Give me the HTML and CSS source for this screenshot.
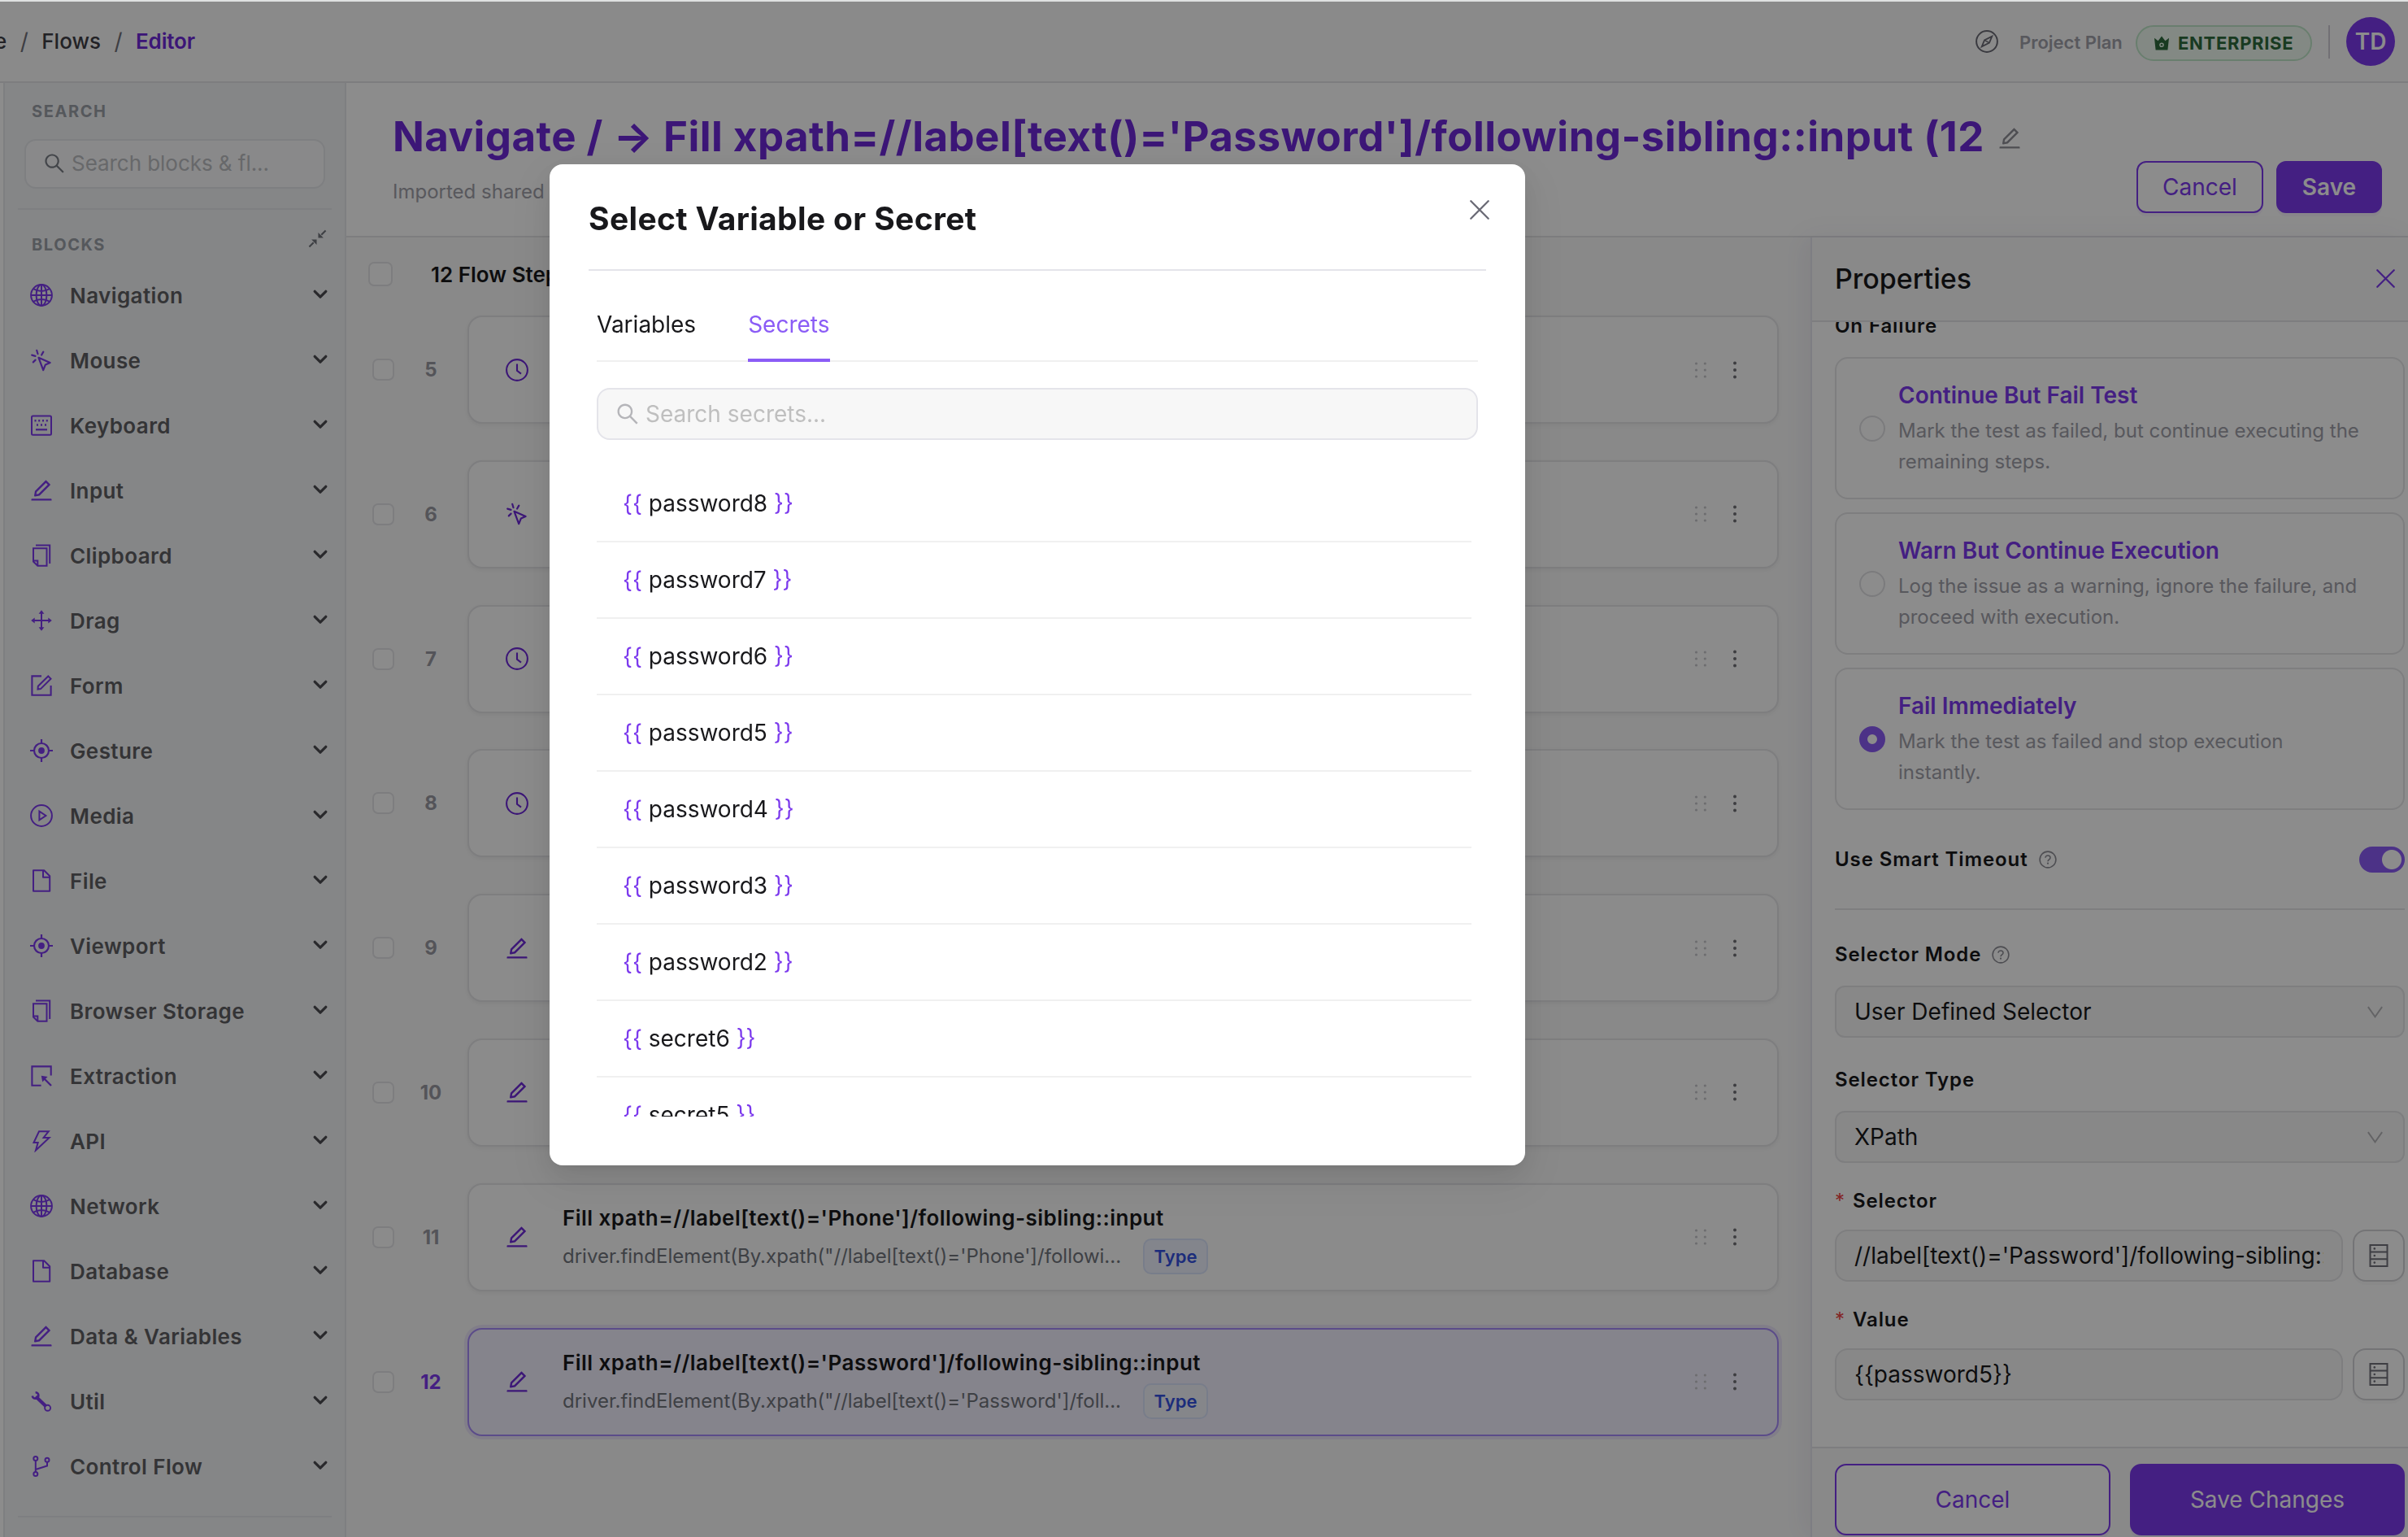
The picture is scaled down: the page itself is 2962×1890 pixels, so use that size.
FILE: index.html
```html
<!DOCTYPE html>
<html lang="en">
<head>
<meta charset="utf-8">
<title>Flow Editor</title>
<link rel="stylesheet" href="styles.css">
</head>
<body>
<svg class="sprite" aria-hidden="true">
  <symbol id="i-globe" viewBox="0 0 28 28"><g fill="none" stroke="currentColor" stroke-width="2"><circle cx="14" cy="14" r="12.9"/><ellipse cx="14" cy="14" rx="6.4" ry="12.9"/><path d="M14 1v26M1 14h26M4 6.2c6 3.6 14 3.6 20 0M4 21.8c6-3.6 14-3.6 20 0"/></g></symbol>
  <symbol id="i-click" viewBox="0 0 28 28"><g fill="none" stroke="currentColor" stroke-width="2.2" stroke-linecap="round" stroke-linejoin="round"><path d="M10.5 10.8 24.6 17 18.9 19.4 16.2 26.2z"/><path d="M8.2 1.8l1.3 4.4M16.3 3.6l-2.2 3.9M2.2 7.6l4.3 1.3M6.6 13.6 3.8 16.4"/></g></symbol>
  <symbol id="i-keyboard" viewBox="0 0 28 28"><rect x="2" y="2.4" width="24" height="23.4" rx="1.5" fill="none" stroke="currentColor" stroke-width="2"/><path d="M5.5 8.2h2M10.2 8.2h2M15 8.2h2M19.8 8.2h2M8 13.5h2M13 13.5h2M18 13.5h2" stroke="currentColor" stroke-width="2.4"/><path d="M7 19.3h14" stroke="currentColor" stroke-width="2.2"/></symbol>
  <symbol id="i-edit" viewBox="64 64 896 896"><path fill="currentColor" d="M257.7 752c2 0 4-.2 6-.5L431.9 722c2-.4 3.9-1.3 5.3-2.8l423.9-423.9a9.96 9.96 0 000-14.1L694.9 114.9c-1.9-1.9-4.4-2.9-7.1-2.9s-5.2 1-7.1 2.9L256.8 538.8c-1.5 1.5-2.4 3.3-2.8 5.3l-29.5 168.2a33.5 33.5 0 009.4 29.8c6.6 6.4 14.9 9.9 23.8 9.9zm67.4-174.4L687.8 215l73.3 73.3-362.7 362.6-88.9 15.7 15.6-89zM880 836H144c-17.7 0-32 14.3-32 32v36c0 4.4 3.6 8 8 8h784c4.4 0 8-3.6 8-8v-36c0-17.7-14.3-32-32-32z"/></symbol>
  <symbol id="i-copy" viewBox="0 0 28 28"><g fill="none" stroke="currentColor" stroke-width="2"><path d="M7 1.4h17.2V24"/><path d="M4 5.2h16.5v21.6H9.3L4 21.5z"/><path d="M4 20.5h5.3v6"/></g></symbol>
  <symbol id="i-drag" viewBox="0 0 28 28"><path d="M14 4v20M4 14h20" stroke="currentColor" stroke-width="2"/><path fill="currentColor" d="M14 1.2l3.4 4.5h-6.8zM14 26.8l3.4-4.5h-6.8zM1.2 14l4.5-3.4v6.8zM26.8 14l-4.5-3.4v6.8z"/></symbol>
  <symbol id="i-form" viewBox="0 0 28 28"><g fill="none" stroke="currentColor" stroke-width="2.1"><path d="M14 2.4H2.4v23.3h23.2V14"/><path d="M9.800 14.800 22.300 2.500l3.200 3.200L13 18.100l-3.500.500z" stroke-width="2"/></g></symbol>
  <symbol id="i-target" viewBox="0 0 28 28"><circle cx="14" cy="14" r="9" fill="none" stroke="currentColor" stroke-width="2.2"/><circle cx="14" cy="14" r="3.9" fill="currentColor"/><path d="M14 0v6M14 22v6M0 14h6M22 14h6" stroke="currentColor" stroke-width="2.2"/></symbol>
  <symbol id="i-play" viewBox="0 0 28 28"><g fill="none" stroke="currentColor" stroke-width="2"><circle cx="14" cy="14" r="12.9"/><path d="M11.4 8.6v10.8l8-5.4z"/></g></symbol>
  <symbol id="i-file" viewBox="0 0 28 28"><g fill="none" stroke="currentColor" stroke-width="2" stroke-linejoin="round"><path d="M4 1.3h13.2l7 7v18.400H4z"/><path d="M16 1.5v8.200h8"/></g></symbol>
  <symbol id="i-extract" viewBox="0 0 28 28"><path d="M25.7 13.5V2.4H2.4v23.3h11.2" fill="none" stroke="currentColor" stroke-width="2.1"/><path d="M26 26 16.5 16.5" stroke="currentColor" stroke-width="2.3"/><path fill="currentColor" d="M13.8 13.8l7.8 1.2-6.4 6.4z"/></symbol>
  <symbol id="i-bolt" viewBox="0 0 28 28"><path d="M11 2.2h11.8L16.6 10h7L7 25.5 9.7 16H4.5z" fill="none" stroke="currentColor" stroke-width="2"/></symbol>
  <symbol id="i-wrench" viewBox="0 0 28 28"><path d="M7 8.2 19.5 20.3" stroke="currentColor" stroke-width="4.2"/><path d="M6.6 3.2a3.8 3.8 0 1 1-3.8 4.3" fill="none" stroke="currentColor" stroke-width="2.6"/><circle cx="21.6" cy="22.3" r="3.5" fill="none" stroke="currentColor" stroke-width="1.9"/></symbol>
  <symbol id="i-branch" viewBox="0 0 28 28"><g fill="none" stroke="currentColor" stroke-width="2"><circle cx="6.8" cy="4.5" r="2.5"/><circle cx="6.8" cy="23.5" r="2.5"/><circle cx="21" cy="6.2" r="2.5"/><path d="M6.8 7v14M6.8 18 21 13.5V9"/></g></symbol>
  <symbol id="i-clock" viewBox="0 0 28 28"><g fill="none" stroke="currentColor" stroke-width="2.1"><circle cx="14" cy="14" r="12.9"/><path d="M14 6.5v8.3l5 3.8"/></g></symbol>
  <symbol id="i-down" viewBox="0 0 18 12"><path d="M2.2 2.3 9 9.2l6.8-6.900" fill="none" stroke="currentColor" stroke-width="3.2" stroke-linecap="round" stroke-linejoin="round"/></symbol>
  <symbol id="i-search" viewBox="64 64 896 896"><path fill="currentColor" d="M909.6 854.5L649.9 594.8C690.2 542.7 712 479 712 412c0-80.2-31.3-155.4-87.9-212.1-56.6-56.7-132-87.9-212.1-87.9s-155.5 31.3-212.1 87.9C143.2 256.5 112 331.8 112 412c0 80.1 31.3 155.5 87.9 212.1C256.5 680.8 331.8 712 412 712c67 0 130.6-21.8 182.7-62l259.700 259.600a8.200 8.200 0 0011.600 0l43.600-43.500a8.200 8.200 0 000-11.600zM570.400 570.400C528 612.700 471.800 636 412 636s-116-23.300-158.400-65.600C211.300 528 188 471.800 188 412s23.300-116.100 65.600-158.400C296 211.300 352.200 188 412 188s116.100 23.200 158.400 65.600S636 352.200 636 412s-23.300 116.100-65.600 158.400z"/></symbol>
  <symbol id="i-help" viewBox="0 0 24 24"><g fill="none" stroke="currentColor" stroke-width="1.7"><circle cx="12" cy="12" r="10.8"/><path d="M8.7 9.6c0-1.9 1.4-3.1 3.3-3.1s3.3 1.2 3.3 3c0 2.4-3.3 2.4-3.3 5"/></g><circle cx="12" cy="17.1" r="1.2" fill="currentColor"/></symbol>
  <symbol id="i-server" viewBox="0 0 24 28"><g fill="none" stroke="currentColor" stroke-width="2"><rect x="1.5" y="1" width="21" height="26"/><path d="M1.5 9.6h21M1.5 18.3h21"/></g><g fill="currentColor"><circle cx="6.8" cy="5.4" r="1.3"/><circle cx="6.8" cy="14" r="1.3"/><circle cx="6.8" cy="22.6" r="1.3"/></g></symbol>
  <symbol id="i-arrow" viewBox="0 0 22 16"><path d="M1.8 1.2 11 14.2 20.2 1.2" fill="none" stroke="currentColor" stroke-width="2"/></symbol>
  <symbol id="i-x" viewBox="0 0 24 24"><path d="M1.3 1.3 22.7 22.7M22.7 1.3 1.3 22.7" fill="none" stroke="currentColor" stroke-width="2.3" stroke-linecap="round"/></symbol>
  <symbol id="i-grip" viewBox="0 0 16 20"><g fill="currentColor"><circle cx="2.5" cy="2" r="1.6"/><circle cx="13.3" cy="2" r="1.6"/><circle cx="2.5" cy="10" r="1.6"/><circle cx="13.3" cy="10" r="1.6"/><circle cx="2.5" cy="18" r="1.6"/><circle cx="13.3" cy="18" r="1.6"/></g></symbol>
  <symbol id="i-more" viewBox="0 0 6 22"><g fill="currentColor"><circle cx="3" cy="2.5" r="2"/><circle cx="3" cy="11" r="2"/><circle cx="3" cy="19.5" r="2"/></g></symbol>
</svg>

<div class="app">
  <header class="topbar">
    <nav class="crumbs"><span>e</span><i>/</i><span>Flows</span><i>/</i><b>Editor</b></nav>
    <div class="topbar-right">
      <svg class="compass" viewBox="0 0 28 28"><g fill="none" stroke="currentColor" stroke-width="2"><circle cx="14" cy="14" r="12.9"/><path d="M20.3 7.7 17 15.6 7.7 20.3 11 12.4z" stroke-width="1.8"/><path d="M11 12.4l6 3.2" stroke-width="1.6"/></g></svg>
      <span class="plan">Project Plan</span>
      <span class="badge"><svg class="crown" viewBox="0 0 18 18"><path fill="currentColor" fill-rule="evenodd" d="M0 2.8l4.6 3.4L9 .4l4.4 5.8L18 2.8 16.4 17.4H1.6zM9 8.4a2.800 2.800 0 100 5.600 2.800 2.800 0 000-5.600z"/><circle cx="9" cy="11.2" r="1.300" fill="currentColor"/></svg><span class="badge-text">ENTERPRISE</span></span>
      <span class="vline"></span>
      <span class="avatar">TD</span>
    </div>
  </header>

  <div class="body">
    <aside class="sidebar">
      <div class="side-label">SEARCH</div>
      <div class="side-search"><svg><use href="#i-search"/></svg><span>Search blocks &amp; fl...</span></div>
      <div class="side-rule"></div>
      <div class="side-head"><span class="side-label">BLOCKS</span>
        <svg class="shrink" viewBox="0 0 24 24"><path d="M22.5 1.5 17 7M1.5 22.5 7 17" stroke="currentColor" stroke-width="2.2"/><path fill="currentColor" d="M13 11V4.300l6.700 6.700zM11 13v6.700l-6.700-6.700z"/></svg></div>
      <ul class="blocks">
        <li><svg class="ic"><use href="#i-globe"/></svg><span>Navigation</span><svg class="dn"><use href="#i-down"/></svg></li>
        <li><svg class="ic"><use href="#i-click"/></svg><span>Mouse</span><svg class="dn"><use href="#i-down"/></svg></li>
        <li><svg class="ic"><use href="#i-keyboard"/></svg><span>Keyboard</span><svg class="dn"><use href="#i-down"/></svg></li>
        <li><svg class="ic"><use href="#i-edit"/></svg><span>Input</span><svg class="dn"><use href="#i-down"/></svg></li>
        <li><svg class="ic"><use href="#i-copy"/></svg><span>Clipboard</span><svg class="dn"><use href="#i-down"/></svg></li>
        <li><svg class="ic"><use href="#i-drag"/></svg><span>Drag</span><svg class="dn"><use href="#i-down"/></svg></li>
        <li><svg class="ic"><use href="#i-form"/></svg><span>Form</span><svg class="dn"><use href="#i-down"/></svg></li>
        <li><svg class="ic"><use href="#i-target"/></svg><span>Gesture</span><svg class="dn"><use href="#i-down"/></svg></li>
        <li><svg class="ic"><use href="#i-play"/></svg><span>Media</span><svg class="dn"><use href="#i-down"/></svg></li>
        <li><svg class="ic"><use href="#i-file"/></svg><span>File</span><svg class="dn"><use href="#i-down"/></svg></li>
        <li><svg class="ic"><use href="#i-target"/></svg><span>Viewport</span><svg class="dn"><use href="#i-down"/></svg></li>
        <li><svg class="ic"><use href="#i-copy"/></svg><span>Browser Storage</span><svg class="dn"><use href="#i-down"/></svg></li>
        <li><svg class="ic"><use href="#i-extract"/></svg><span>Extraction</span><svg class="dn"><use href="#i-down"/></svg></li>
        <li><svg class="ic"><use href="#i-bolt"/></svg><span>API</span><svg class="dn"><use href="#i-down"/></svg></li>
        <li><svg class="ic"><use href="#i-globe"/></svg><span>Network</span><svg class="dn"><use href="#i-down"/></svg></li>
        <li><svg class="ic"><use href="#i-file"/></svg><span>Database</span><svg class="dn"><use href="#i-down"/></svg></li>
        <li><svg class="ic"><use href="#i-edit"/></svg><span>Data &amp; Variables</span><svg class="dn"><use href="#i-down"/></svg></li>
        <li><svg class="ic"><use href="#i-wrench"/></svg><span>Util</span><svg class="dn"><use href="#i-down"/></svg></li>
        <li><svg class="ic"><use href="#i-branch"/></svg><span>Control Flow</span><svg class="dn"><use href="#i-down"/></svg></li>
      </ul>
      <div class="side-rule end"></div>
    </aside>

    <main class="main">
      <section class="head">
        <div class="head-text">
          <div class="title-row"><h1>Navigate / → Fill xpath=//label[text()='Password']/following-sibling::input (12</h1><svg><use href="#i-edit"/></svg></div>
          <p>Imported shared flow</p>
        </div>
        <div class="head-actions"><button class="btn ghost">Cancel</button><button class="btn solid strong">Save</button></div>
      </section>

      <div class="work">
        <section class="steps">
          <div class="steps-head"><span class="check big"></span><span>12 Flow Steps</span></div>
          <div class="step"><span class="check"></span><span class="num">5</span><div class="card"><svg class="ic"><use href="#i-clock"/></svg><div class="info"></div><svg class="grip"><use href="#i-grip"/></svg><svg class="more"><use href="#i-more"/></svg></div></div>
          <div class="step"><span class="check"></span><span class="num">6</span><div class="card"><svg class="ic"><use href="#i-click"/></svg><div class="info"></div><svg class="grip"><use href="#i-grip"/></svg><svg class="more"><use href="#i-more"/></svg></div></div>
          <div class="step"><span class="check"></span><span class="num">7</span><div class="card"><svg class="ic"><use href="#i-clock"/></svg><div class="info"></div><svg class="grip"><use href="#i-grip"/></svg><svg class="more"><use href="#i-more"/></svg></div></div>
          <div class="step"><span class="check"></span><span class="num">8</span><div class="card"><svg class="ic"><use href="#i-clock"/></svg><div class="info"></div><svg class="grip"><use href="#i-grip"/></svg><svg class="more"><use href="#i-more"/></svg></div></div>
          <div class="step"><span class="check"></span><span class="num">9</span><div class="card"><svg class="ic"><use href="#i-edit"/></svg><div class="info"></div><svg class="grip"><use href="#i-grip"/></svg><svg class="more"><use href="#i-more"/></svg></div></div>
          <div class="step"><span class="check"></span><span class="num">10</span><div class="card"><svg class="ic"><use href="#i-edit"/></svg><div class="info"></div><svg class="grip"><use href="#i-grip"/></svg><svg class="more"><use href="#i-more"/></svg></div></div>
          <div class="step"><span class="check"></span><span class="num">11</span><div class="card"><svg class="ic"><use href="#i-edit"/></svg>
            <div class="info"><div class="name">Fill xpath=//label[text()='Phone']/following-sibling::input</div><div class="sub"><span class="code">driver.findElement(By.xpath("//label[text()='Phone']/followi...</span><span class="tag">Type</span></div></div>
            <svg class="grip"><use href="#i-grip"/></svg><svg class="more"><use href="#i-more"/></svg></div></div>
          <div class="step active"><span class="check"></span><span class="num">12</span><div class="card"><svg class="ic"><use href="#i-edit"/></svg>
            <div class="info"><div class="name">Fill xpath=//label[text()='Password']/following-sibling::input</div><div class="sub"><span class="code">driver.findElement(By.xpath("//label[text()='Password']/foll...</span><span class="tag pale">Type</span></div></div>
            <svg class="grip"><use href="#i-grip"/></svg><svg class="more"><use href="#i-more"/></svg></div></div>
        </section>

        <aside class="props">
          <div class="props-head"><h2>Properties</h2><svg><use href="#i-x"/></svg></div>
          <div class="props-body">
            <div class="label cut">On Failure</div>
            <div class="options">
              <div class="option"><span class="radio"></span><div><div class="o-title">Continue But Fail Test</div><p>Mark the test as failed, but continue executing the<br>remaining steps.</p></div></div>
              <div class="option"><span class="radio"></span><div><div class="o-title">Warn But Continue Execution</div><p>Log the issue as a warning, ignore the failure, and<br>proceed with execution.</p></div></div>
              <div class="option"><span class="radio on"></span><div><div class="o-title">Fail Immediately</div><p>Mark the test as failed and stop execution<br>instantly.</p></div></div>
            </div>
            <div class="smart"><span class="label">Use Smart Timeout</span><svg class="help"><use href="#i-help"/></svg><span class="switch"></span></div>
            <div class="label mode">Selector Mode<svg class="help"><use href="#i-help"/></svg></div>
            <div class="field select first"><span>User Defined Selector</span><svg><use href="#i-arrow"/></svg></div>
            <div class="label type">Selector Type</div>
            <div class="field select second"><span>XPath</span><svg><use href="#i-arrow"/></svg></div>
            <div class="label req"><em>*</em>Selector</div>
            <div class="pair"><div class="field input"><span>//label[text()='Password']/following-sibling::input</span></div><button class="icon-btn"><svg><use href="#i-server"/></svg></button></div>
            <div class="label req"><em>*</em>Value</div>
            <div class="pair"><div class="field input"><span>{{password5}}</span></div><button class="icon-btn"><svg><use href="#i-server"/></svg></button></div>
          </div>
          <div class="props-foot"><button class="btn ghost">Cancel</button><button class="btn solid">Save Changes</button></div>
        </aside>
      </div>
    </main>
  </div>
</div>

<div class="mask">
  <div class="modal">
    <div class="modal-head"><h2>Select Variable or Secret</h2><svg><use href="#i-x"/></svg></div>
    <div class="modal-body">
      <div class="tabs"><span class="tab">Variables</span><span class="tab on">Secrets</span></div>
      <div class="m-search"><svg><use href="#i-search"/></svg><span>Search secrets...</span></div>
      <ul class="secrets">
        <li><b>{{</b> <span>password8</span> <b>}}</b></li>
        <li><b>{{</b> <span>password7</span> <b>}}</b></li>
        <li><b>{{</b> <span>password6</span> <b>}}</b></li>
        <li><b>{{</b> <span>password5</span> <b>}}</b></li>
        <li><b>{{</b> <span>password4</span> <b>}}</b></li>
        <li><b>{{</b> <span>password3</span> <b>}}</b></li>
        <li><b>{{</b> <span>password2</span> <b>}}</b></li>
        <li><b>{{</b> <span>secret6</span> <b>}}</b></li>
        <li><b>{{</b> <span>secret5</span> <b>}}</b></li>
      </ul>
    </div>
  </div>
</div>
</body>
</html>
```
FILE: styles.css
```css
* { box-sizing: border-box; margin: 0; padding: 0; }
html, body { width: 2962px; height: 1890px; overflow: hidden; }
body { font-family: Inter, "Liberation Sans", sans-serif; font-size: 28px; color: #18181b; background: #dfe1e1; padding-top: 2px; }
ul { list-style: none; }
button { font: inherit; }
svg { display: block; flex: none; }
.sprite { position: absolute; width: 0; height: 0; }

.app { height: 1888px; background: #fff; display: flex; flex-direction: column; overflow: hidden; }

/* Top bar */
.topbar { height: 100px; flex: none; background: #fcfcfc; border-bottom: 2px solid #e4e4e7; display: flex; justify-content: space-between; align-items: center; padding-right: 16px; }
.crumbs { display: flex; align-items: center; font-size: 26px; font-weight: 500; line-height: 40px; color: #3f3f46; margin-left: -7px; }
.crumbs i { font-style: normal; width: 43px; text-align: center; font-size: 28px; font-weight: 400; color: #71717a; }
.crumbs b { font-weight: 600; letter-spacing: -.15px; color: #6d28d9; }
.topbar-right { display: flex; align-items: center; }
.compass { width: 28px; height: 28px; color: #6b6b75; margin-right: 26px; }
.plan { font-size: 22px; font-weight: 600; color: #a1a1aa; width: 143px; padding-top: 2px; }
.badge { display: flex; align-items: center; width: 217px; height: 44px; border: 2px solid #bfe6c8; border-radius: 22px; background: #eefaf1; color: #2f6b3c; padding-left: 21px; margin-top: 3px; }
.crown { width: 18px; height: 18px; margin-right: 11px; }
.badge-text { font-size: 22px; font-weight: 700; letter-spacing: .7px; }
.vline { width: 2px; height: 41px; background: #cfcdd6; margin: 0 20px; }
.avatar { width: 60px; height: 60px; border-radius: 50%; background: #7c3aed; color: #fff; font-weight: 600; display: flex; align-items: center; justify-content: center; }

.body { flex: 1; display: flex; min-height: 0; }

/* Block library */
.sidebar { width: 422px; margin-left: 4px; flex: none; background: #f3f4f6; border: solid #e5e7eb; border-width: 0 2px; padding: 23px 16px 0; }
.side-label { font-size: 20px; line-height: 24px; font-weight: 700; letter-spacing: 1.6px; color: #9ca0a8; padding-left: 17px; }
.side-search { margin: 22px 8px 0; height: 61px; border: 2px solid #e5e7eb; border-radius: 14px; background: #f9fafb; display: flex; align-items: center; padding: 0 0 2px 22px; color: #bcbdc2; font-size: 26px; letter-spacing: -.05px; }
.side-search svg { width: 26px; height: 26px; color: #7b7f87; margin-right: 8px; }
.side-rule { height: 2px; background: #e5e7eb; margin-top: 24px; }
.side-head { display: flex; justify-content: space-between; align-items: flex-end; height: 55px; padding-right: 6px; }
.shrink { width: 23px; height: 25px; color: #71757d; margin-bottom: 7px; }
.blocks { margin-top: 10px; }
.blocks li { height: 80px; display: flex; align-items: center; padding: 0 5px 0 15px; font-size: 26px; font-weight: 600; letter-spacing: .4px; color: #5f5f63; }
.blocks .ic { width: 28px; height: 28px; color: #7c3aed; margin-right: 21px; }
.blocks span { flex: 1; }
.dn { width: 18px; height: 12px; margin-top: -3px; color: #4b4b50; }
.side-rule.end { margin-top: 21px; }

/* Page head */
.main { flex: 1; display: flex; flex-direction: column; min-width: 0; background: #fff; }
.head { height: 190px; flex: none; border-bottom: 2px solid #e4e4e7; display: flex; justify-content: space-between; padding: 31px 32px 0 57px; }
.title-row { display: flex; align-items: center; }
.title-row h1 { font-size: 51px; line-height: 70px; font-weight: 700; letter-spacing: .46px; color: #6d28d9; white-space: nowrap; }
.title-row svg { width: 28px; height: 28px; color: #8e8e96; margin: 3px 0 0 17px; }
.head p { font-size: 24px; line-height: 36px; color: #a1a1aa; margin-top: 15px; }
.head-actions { display: flex; gap: 16px; margin-top: 65px; }
.btn { height: 64px; border-radius: 12px; border: 2px solid #7c3aed; font-size: 28px; box-shadow: 0 4px 0 rgba(124, 58, 237, .06); }
.ghost { color: #7c3aed; background: #fff; width: 156px; }
.solid { color: #fff; background: #7c3aed; width: 130px; }
.strong { font-weight: 600; }

.work { flex: 1; display: flex; min-height: 0; }

/* Steps */
.steps { width: 1801px; flex: none; background: #fafafa; padding-right: 39px; }
.steps-head { height: 96px; display: flex; align-items: center; padding: 0 0 6px 27px; font-size: 26px; font-weight: 600; gap: 47px; }
.check { width: 27px; height: 27px; flex: none; border: 2px solid #e4e4e7; border-radius: 7px; background: #fdfdfd; }
.check.big { width: 30px; height: 30px; }
.step { display: flex; align-items: center; height: 133px; margin-bottom: 44.8px; padding-left: 32px; }
.num { width: 60px; margin: 0 15px 0 15px; text-align: center; font-size: 24px; font-weight: 700; color: #9a9aa2; }
.card { flex: 1; height: 100%; border: 2px solid #e5e5e8; border-radius: 18px; background: #fdfdfd; box-shadow: 0 2px 6px rgba(0, 0, 0, .06); display: flex; align-items: center; padding: 0 49px 0 45px; }
.card .ic { width: 28px; height: 28px; color: #6d28d9; }
.info { flex: 1; padding: 4px 0 0 42px; }
.name { font-size: 26px; line-height: 36px; font-weight: 600; letter-spacing: .46px; white-space: nowrap; }
.sub { display: flex; align-items: center; margin-top: 7px; height: 44px; }
.code { width: 714px; font-size: 24px; color: #71757d; white-space: nowrap; }
.tag { width: 80px; height: 44px; border: 2px solid #dbe4fb; border-radius: 10px; background: #eff3ff; color: #3451e0; font-size: 22px; font-weight: 600; line-height: 40px; text-align: center; }
.tag.pale { background: #f3f4fb; }
.grip { width: 16px; height: 20px; color: #c6c6cb; }
.more { width: 6px; height: 22px; color: #6f6f75; margin-left: 31px; }
.active .num { color: #7c3aed; }
.active .card { background: #f3f0ff; border-color: #a78bfa; box-shadow: 0 0 0 4px rgba(139, 92, 246, .12); }

/* Properties */
.props { flex: 1; position: relative; background: #fff; border-left: 2px solid #e5e5ee; box-shadow: -8px 0 32px rgba(76, 60, 130, .07); display: flex; flex-direction: column; min-width: 0; }
.props-head { height: 104px; flex: none; border-bottom: 2px solid #e4e4e7; background: #f9f9fa; display: flex; justify-content: space-between; align-items: center; padding: 0 16px 2px 28px; }
.props-head h2 { font-size: 34px; font-weight: 500; }
.props-head svg { width: 23px; height: 23px; color: #7c3aed; }
.props-body { height: 1383px; flex: none; overflow: hidden; padding: 0 4px 0 28px; }
.label { font-size: 24px; line-height: 36px; font-weight: 600; letter-spacing: .9px; display: flex; align-items: center; }
.label.cut { margin-top: -13px; height: 36px; }
.options { margin-top: 20px; display: grid; gap: 16px; }
.option { height: 175px; border: 2px solid #e5e5e8; border-radius: 16px; display: flex; align-items: center; padding-left: 28px; }
.radio { width: 32px; height: 32px; flex: none; border: 2px solid #e0e0e3; border-radius: 50%; margin-right: 16px; }
.radio.on { border: 10px solid #8b5cf6; background: #fff; }
.o-title { font-size: 28px; line-height: 40px; font-weight: 600; color: #7c3aed; }
.option p { font-size: 24px; line-height: 38px; color: #a1a1aa; margin-top: 5px; }
.smart { height: 123px; border-bottom: 2px solid #e5e5e8; display: flex; align-items: center; }
.help { width: 22px; height: 22px; color: #8e8e96; margin-left: 13px; }
.switch { margin-left: auto; width: 56px; height: 32px; border-radius: 16px; background: radial-gradient(circle at 40px 16px, #fff 11.5px, transparent 12.5px), #8b5cf6; }
.mode { margin-top: 37px; }
.field { height: 64px; border: 2px solid #e5e5e8; border-radius: 12px; background: #f8f8f8; display: flex; align-items: center; padding-left: 22px; font-size: 28px; }
.select { justify-content: space-between; padding-right: 24px; }
.select svg { width: 21px; height: 15px; color: #b4b4b8; }
.first { margin-top: 20px; }
.type { margin-top: 34px; }
.second { margin-top: 20px; }
.req { margin-top: 29px; }
.req em { color: #ef4444; font-style: normal; font-weight: 400; width: 22px; letter-spacing: 0; }
.pair { display: flex; gap: 12px; margin-top: 17px; }
.input { flex: 1; min-width: 0; border-radius: 16px; padding-right: 22px; }
.input span { overflow: hidden; white-space: nowrap; line-height: 40px; }
.icon-btn { width: 64px; height: 64px; border: 2px solid #d4d4d8; border-radius: 16px; background: #fff; color: #71717a; display: flex; align-items: center; justify-content: center; box-shadow: 0 4px 0 rgba(0, 0, 0, .02); }
.icon-btn svg { width: 24px; height: 28px; }
.props-foot { flex: 1; border-top: 2px solid #e4e4e7; background: #f9f9fa; display: grid; grid-template-columns: 339px 338px; gap: 24px; padding: 19px 0 0 28px; }
.props-foot .btn { width: 100%; height: 88px; border-radius: 14px; }

/* Dialog */
.mask { position: fixed; inset: 2px 0 0; background: rgba(0, 0, 0, .45); padding: 200px 1086px 0 676px; }
.modal { height: 1231px; background: #fff; border-radius: 16px; padding: 0 48px; box-shadow: 0 12px 32px rgba(0, 0, 0, .08), 0 6px 12px -8px rgba(0, 0, 0, .12), 0 18px 56px 16px rgba(0, 0, 0, .05); }
.modal-head { height: 131px; border-bottom: 2px solid #e4e4ea; display: flex; justify-content: space-between; }
.modal-head h2 { font-size: 39px; font-weight: 700; line-height: 50px; letter-spacing: .35px; margin-top: 42px; }
.modal-head svg { width: 24px; height: 24px; color: #6b6b76; margin: 44px -4px 0 0; }
.modal-body { padding: 0 10px; }
.tabs { height: 112px; border-bottom: 2px solid #f0f0f0; display: flex; gap: 64px; }
.tab { height: 112px; padding-top: 46px; line-height: 40px; }
.tab.on { color: #8b5cf6; border-bottom: 4px solid #8b5cf6; }
.m-search { margin-top: 32px; height: 64px; border: 2px solid #e4e4ea; border-radius: 16px; background: #f7f7f7; color: #bfbfbf; display: flex; align-items: center; padding-left: 22px; }
.m-search svg { width: 28px; height: 28px; margin-right: 8px; color: #b5b5b9; }
.secrets { margin: 32px 8px 0 0; height: 800px; overflow: hidden; }
.secrets li { height: 94px; border-bottom: 2px solid #f0f0f0; padding-left: 32px; line-height: 92px; }
.secrets b { font-weight: 400; color: #7c3aed; }
```
